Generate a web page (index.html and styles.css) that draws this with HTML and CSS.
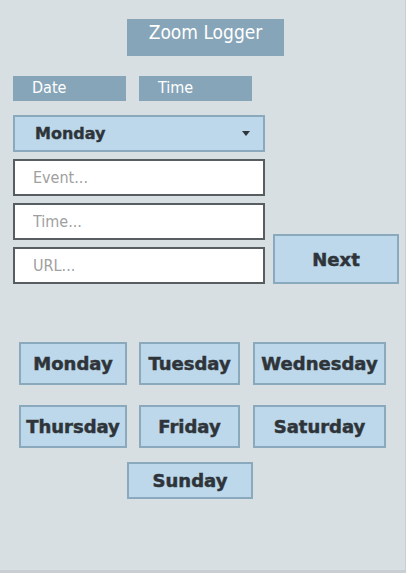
FILE: index.html
```html
<!DOCTYPE html>
<html lang="en">
<head>
    <meta charset="UTF-8">
    <meta name="viewport" content="width=device-width, initial-scale=1.0">
    <title>Zoom Logger</title>

    <link rel="stylesheet" href="styles.css">
</head>
<body>

    <div class="app">
        <div class="header_row">
            <h1 class="header_title">Zoom Logger</h1>
        </div>

        <div class="form_area">
            <div class="form_col">
                <div class="tabs">
                    <div class="tab_label">Date</div>
                    <div class="tab_label">Time</div>
                </div>

                <div class="day_select_wrap">
                    <select class="day_select" name="day">
                        <option>Monday</option>
                        <option>Tuesday</option>
                        <option>Wednesday</option>
                        <option>Thursday</option>
                        <option>Friday</option>
                        <option>Saturday</option>
                        <option>Sunday</option>
                    </select>
                </div>

                <input class="text_input" type="text" placeholder="Event..." autocomplete="off">
                <input class="text_input" type="text" placeholder="Time..." autocomplete="off">
                <input class="text_input" type="text" placeholder="URL..." autocomplete="off">
            </div>

            <button class="next_btn">Next</button>
        </div>

        <!-- day buttons -->
        <div class="days">
            <button class="day_btn">Monday</button>
            <button class="day_btn">Tuesday</button>
            <button class="day_btn">Wednesday</button>
            <button class="day_btn">Thursday</button>
            <button class="day_btn">Friday</button>
            <button class="day_btn">Saturday</button>
            <button class="day_btn day_sunday">Sunday</button>
        </div>
    </div>

</body>
</html>
```

FILE: styles.css
```css
html{
    background: #c8ced1;
}
body{
    margin: 0;
    font-family: "DejaVu Sans Condensed", "DejaVu Sans", Verdana, sans-serif;
}

.app{
    width: 405px;
    height: 570px;
    background-color: #d8dfe3;
    box-sizing: border-box;
    padding-top: 19px;
}

/* title */
.header_row{
    display: flex;
    padding-left: 127px;
}
.header_title{
    margin: 0;
    width: 157px;
    height: 37px;
    box-sizing: border-box;
    padding-top: 2px;
    background-color: #87a5b8;
    color: #fff;
    font-size: 19px;
    font-weight: normal;
    line-height: 23px;
    text-align: center;
}

/* form */
.form_area{
    display: flex;
    align-items: flex-end;
    gap: 8px;
    padding-left: 13px;
    margin-top: 20px;
}
.form_col{
    display: flex;
    flex-direction: column;
    width: 252px;
}

.tabs{
    display: flex;
    gap: 13px;
    margin-bottom: 14px;
}
.tab_label{
    width: 113px;
    height: 25px;
    box-sizing: border-box;
    padding-left: 19px;
    background-color: #87a5b8;
    color: #fff;
    font-size: 16px;
    line-height: 24px;
}

.day_select_wrap{
    position: relative;
    margin-bottom: 7px;
}
.day_select_wrap::after{
    content: "";
    position: absolute;
    right: 15px;
    top: 16px;
    border-left: 4px solid transparent;
    border-right: 4px solid transparent;
    border-top: 5px solid #2e3439;
    pointer-events: none;
}
.day_select{
    appearance: none;
    -webkit-appearance: none;
    width: 100%;
    height: 37px;
    margin: 0;
    padding: 0 0 0 20px;
    border: 2px solid #8aa9bc;
    border-radius: 0;
    background-color: #bcd8ea;
    color: #2e3439;
    font-family: "DejaVu Sans", Verdana, sans-serif;
    font-size: 16px;
    font-weight: bold;
    -webkit-text-stroke: 0.4px #2e3439;
    outline: none;
}

.text_input{
    width: 100%;
    height: 37px;
    box-sizing: border-box;
    margin: 0 0 7px 0;
    padding: 0 0 0 18px;
    border: 2px solid #585d61;
    border-radius: 0;
    background: #fff;
    font-family: "DejaVu Sans Condensed", "DejaVu Sans", Verdana, sans-serif;
    font-size: 16px;
    outline: none;
}
.text_input:last-child{
    margin-bottom: 0;
}
.text_input::placeholder{
    color: #a0a0a0;
}

.next_btn{
    width: 126px;
    height: 50px;
    margin: 0;
    border: 2px solid #8aa9bc;
    background-color: #bcd8ea;
    color: #2e3439;
    font-family: "DejaVu Sans", Verdana, sans-serif;
    font-size: 18px;
    font-weight: bold;
    -webkit-text-stroke: 0.5px #2e3439;
    cursor: pointer;
}

/* day buttons */
.days{
    display: grid;
    grid-template-columns: 108px 101px 133px;
    grid-auto-rows: 43px;
    column-gap: 12px;
    row-gap: 20px;
    padding-left: 19px;
    margin-top: 58px;
}
.day_btn{
    margin: 0;
    padding: 0;
    border: 2px solid #8aa9bc;
    background-color: #bcd8ea;
    color: #2e3439;
    font-family: "DejaVu Sans", Verdana, sans-serif;
    font-size: 18px;
    font-weight: bold;
    -webkit-text-stroke: 0.5px #2e3439;
    white-space: nowrap;
    cursor: pointer;
}
.day_btn:nth-child(3n){
    margin-left: 1px;
    margin-right: -1px;
}
.day_sunday{
    grid-column: 2;
    height: 37px;
    margin: -6px -13px 0 -12px;
}
```
